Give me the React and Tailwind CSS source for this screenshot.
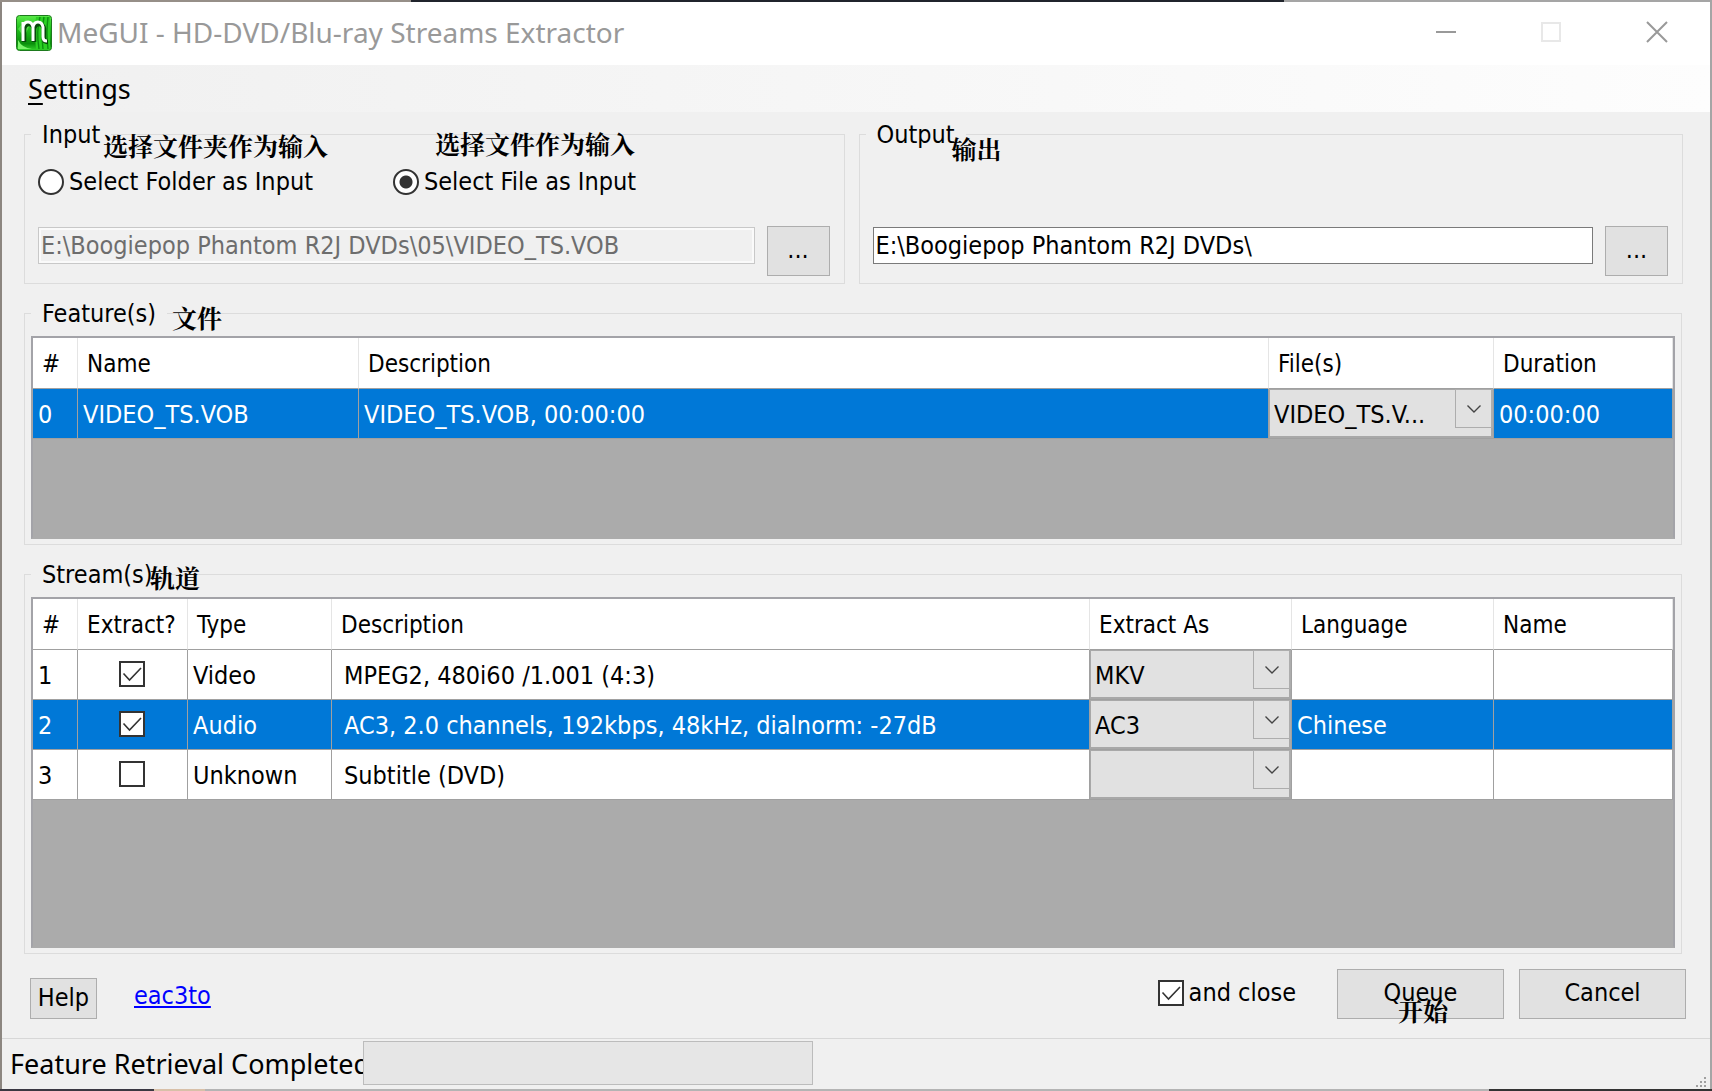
import { useState } from "react";

const fieldText = "text-[25px] leading-[30px]";
const button =
  "border border-[#adadad] bg-[#e1e1e1] pb-[2px] text-black text-[25px] leading-[30px] flex items-center justify-center shrink-0";

function AppIcon() {
  return (
    <svg width="36" height="36" viewBox="0 0 36 36" aria-hidden="true">
      <defs>
        <linearGradient id="leaf" x1="0" y1="0" x2="0" y2="1">
          <stop offset="0" stopColor="#5bea4a" />
          <stop offset="0.35" stopColor="#22c41e" />
          <stop offset="0.8" stopColor="#0a8f0c" />
          <stop offset="1" stopColor="#34d42c" />
        </linearGradient>
      </defs>
      <rect x="0.5" y="0.5" width="35" height="35" rx="3" fill="url(#leaf)" stroke="#1d7a1d" />
      <path d="M20 2q-2 14 0 32h14V2z" fill="#2bd023" />
      <path d="M24 2q-4 14-1 32M28 2q-3 16-1 32M32 2q-2 16 0 32" stroke="#0c8f10" strokeWidth="1.4" fill="none" />
      <path d="M2 25q4 8 14 9H2z" fill="#7df56c" />
      <path d="M2 14L10 4l4 6-6 12z" fill="#7df56c" opacity="0.5" />
      <path d="M8 9v18M8 14q1-5 5-5t5 5v13M18 14q1-5 5-5t5 5v9q0 4 4 4" stroke="#074a0a" strokeWidth="4.500" fill="none" />
      <path d="M7 7v19M7 12q1-5 5-5t5 5v14M17 12q1-5 5-5t5 5v10q0 4 4 4" stroke="#fff" strokeWidth="3" fill="none" />
    </svg>
  );
}

function Note({ className, children }) {
  return (
    <span
      lang="zh"
      className={
        "pointer-events-none absolute z-10 whitespace-nowrap font-['Noto_Serif_CJK_SC','Noto_Sans_CJK_SC',serif] text-[25px] leading-[30px] font-bold text-black " +
        className
      }
    >
      {children}
    </span>
  );
}

function Group({ title, note, className = "", children }) {
  return (
    <fieldset className={"relative min-w-0 border border-[#dcdcdc] " + className}>
      <legend className={"ml-[6px] px-[11px] pt-[2px] " + fieldText}>{title}</legend>
      {note}
      {children}
    </fieldset>
  );
}

function Radio({ id, label, checked, onChange }) {
  return (
    <div className="relative flex items-center gap-[5px]">
      <input
        id={id}
        type="radio"
        name="source"
        checked={checked}
        onChange={onChange}
        className="size-[26px] shrink-0 appearance-none rounded-full border-2 border-[#333] bg-white checked:bg-[radial-gradient(circle,#333_0_6px,#fff_7px)]"
      />
      <label htmlFor={id} className={"whitespace-nowrap " + fieldText}>{label}</label>
    </div>
  );
}

function Tick({ id, label, defaultChecked }) {
  return (
    <span className="relative block size-[26px] shrink-0">
      <input
        id={id}
        aria-label={label}
        type="checkbox"
        defaultChecked={defaultChecked}
        className="peer block size-[26px] appearance-none border-2 border-[#333] bg-white"
      />
      <svg viewBox="0 0 26 26" className="pointer-events-none absolute inset-0 hidden peer-checked:block" aria-hidden="true">
        <path d="M4.500 12.500l6 6.500L22 7" fill="none" stroke="#333" strokeWidth="1.600" />
      </svg>
    </span>
  );
}

function Combo({ label, value }) {
  return (
    <div className="relative h-[49px]">
      <select
        aria-label={label}
        defaultValue={value}
        className="block h-full w-full appearance-none border border-r-2 border-b-2 border-[#a8a8a8] bg-[#e1e1e1] pt-[3px] pl-[4px] text-[25px] leading-[30px] text-black"
      >
        <option value={value}>{value}</option>
      </select>
      <span className="pointer-events-none absolute top-0 right-0 flex h-[39px] w-[38px] items-center justify-center border border-r-2 border-[#adadad]">
        <svg width="14" height="8" viewBox="0 0 14 8" aria-hidden="true">
          <path d="M0.500 0.500L7 7l6.500-6.500" fill="none" stroke="#444" strokeWidth="1.400" />
        </svg>
      </span>
    </div>
  );
}

function Grid({ columns, className, children }) {
  return (
    <div className={"border-2 border-[#a3a3a8] border-b-[#ababab] bg-[#ababab] " + className}>
      <table className="w-full table-fixed border-separate border-spacing-0 text-left">
        <colgroup>
          {columns.map((c, i) => (
            <col key={i} className={c.width} />
          ))}
        </colgroup>
        <thead>
          <tr>
            {columns.map((c, i) => (
              <th
                key={i}
                scope="col"
                className="h-[51px] overflow-hidden border-r border-b border-r-[#e5e5e5] border-b-[#a0a0a0] bg-white pt-[2px] pl-[9px] text-[24px] leading-[30px] font-normal whitespace-nowrap"
              >
                {c.title}
              </th>
            ))}
          </tr>
        </thead>
        <tbody>{children}</tbody>
      </table>
    </div>
  );
}

function Cell({ selected, className = "pt-[2px] pl-[5px]", children }) {
  return (
    <td
      className={
        "h-[50px] overflow-hidden whitespace-nowrap border-r border-b border-[#a0a0a0] " +
        fieldText +
        (selected ? " bg-[#0078d7] text-white " : " bg-white text-black ") +
        className
      }
    >
      {children}
    </td>
  );
}

const featureColumns = [
  { title: "#", width: "w-[45px]" },
  { title: "Name", width: "w-[281px]" },
  { title: "Description", width: "" },
  { title: "File(s)", width: "w-[225px]" },
  { title: "Duration", width: "w-[179px]" },
];

const streamColumns = [
  { title: "#", width: "w-[45px]" },
  { title: "Extract?", width: "w-[110px]" },
  { title: "Type", width: "w-[144px]" },
  { title: "Description", width: "" },
  { title: "Extract As", width: "w-[202px]" },
  { title: "Language", width: "w-[202px]" },
  { title: "Name", width: "w-[179px]" },
];

const streams = [
  { n: 1, on: true, type: "Video", text: "MPEG2, 480i60 /1.001 (4:3)", as: "MKV", lang: "" },
  { n: 2, on: true, type: "Audio", text: "AC3, 2.0 channels, 192kbps, 48kHz, dialnorm: -27dB", as: "AC3", lang: "Chinese", selected: true },
  { n: 3, on: false, type: "Unknown", text: "Subtitle (DVD)", as: "", lang: "" },
];

export default function App() {
  const [source, setSource] = useState("file");
  return (
    <div className="flex min-h-screen flex-col bg-[#f0f0f0] font-['DejaVu_Sans_Condensed','DejaVu_Sans','Noto_Sans_CJK_SC',sans-serif] font-stretch-condensed text-black">
      <div className="h-[2px] bg-[linear-gradient(to_right,#968f88_24%,#20242c_24%,#20242c_75%,#a5a5a5_75%)]" />
      <div className="flex flex-1 flex-col border-r-2 border-l-2 border-r-[#a5a5a5] border-l-[#8c8680]">
        <header className="flex h-[63px] items-center bg-white pb-[3px] font-['Noto_Sans',sans-serif] font-stretch-normal">
          <div className="mt-px ml-[14px]"><AppIcon /></div>
          <h1 className="ml-[5px] flex-1 text-[28px] leading-[36px] whitespace-nowrap text-[#999]">
            MeGUI - HD-DVD/Blu-ray Streams Extractor
          </h1>
          <div className="flex h-full items-center">
            <button aria-label="Minimize" className="flex h-full w-[105px] items-center justify-center">
              <svg width="22" height="22" viewBox="0 0 22 22"><path d="M1 11h20" stroke="#999" strokeWidth="2" /></svg>
            </button>
            <button aria-label="Maximize" disabled className="flex h-full w-[105px] items-center justify-center">
              <svg width="22" height="22" viewBox="0 0 22 22"><path d="M2 2h18v18H2z" fill="none" stroke="#e8e8e8" strokeWidth="2" /></svg>
            </button>
            <button aria-label="Close" className="flex h-full w-[107px] items-center justify-center">
              <svg width="22" height="22" viewBox="0 0 22 22"><path d="M1 1l20 20M21 1L1 21" stroke="#999" strokeWidth="2" /></svg>
            </button>
          </div>
        </header>

        <nav className="flex h-[47px] items-center bg-linear-to-r from-[#f0f0f0] to-[#fdfdfd] pl-[26px] font-['Noto_Sans',sans-serif] font-stretch-normal">
          <button className="text-[27px] leading-[36px]"><u className="underline underline-offset-4">S</u>ettings</button>
        </nav>

        <main className="flex flex-1 flex-col gap-[13px] px-[22px] pt-[6px]">
          <div className="mr-[5px] grid grid-cols-[821fr_825fr] gap-[14px]">
            <Group
              title="Input"
              note={
                <>
                  <Note className="top-[-20px] left-[78px]">选择文件夹作为输入</Note>
                  <Note className="top-[-22px] left-[410px]">选择文件作为输入</Note>
                </>
              }
            >
              <div className="flex h-[47px] items-end gap-[80px] pl-[13px]">
                <Radio id="folder" label="Select Folder as Input" checked={source === "folder"} onChange={() => setSource("folder")} />
                <Radio id="file" label="Select File as Input" checked={source === "file"} onChange={() => setSource("file")} />
              </div>
              <div className="mt-[29px] mb-[7px] flex gap-[12px] pr-[14px] pl-[13px]">
                <input
                  aria-label="Input path"
                  disabled
                  defaultValue="E:\Boogiepop Phantom R2J DVDs\05\VIDEO_TS.VOB"
                  className="mt-px h-[37px] min-w-0 flex-1 border border-[#c8c8c8] bg-[#f0f0f0] px-[2px] text-[25px] leading-[30px] text-[#6d6d6d] inset-ring-2 inset-ring-[#fafafa]"
                />
                <button aria-label="Browse input" className={button + " h-[50px] w-[63px]"}>...</button>
              </div>
            </Group>
            <Group title="Output" note={<Note className="top-[-17px] left-[92px]">输出</Note>}>
              <div className="mt-[76px] mb-[7px] flex gap-[12px] pr-[14px] pl-[13px]">
                <input
                  aria-label="Output path"
                  defaultValue="E:\Boogiepop Phantom R2J DVDs\"
                  className="mt-px h-[37px] min-w-0 flex-1 border border-[#7a7a7a] bg-white px-[2px] text-[25px] leading-[30px]"
                />
                <button aria-label="Browse output" className={button + " h-[50px] w-[63px]"}>...</button>
              </div>
            </Group>
          </div>

          <Group title="Feature(s)" className="mr-[6px]" note={<Note className="top-[-27px] left-[147px]">文件</Note>}>
            <Grid columns={featureColumns} className="mx-[6px] mt-[7px] mb-[5px] h-[203px]">
              <tr>
                <Cell selected>0</Cell>
                <Cell selected>VIDEO_TS.VOB</Cell>
                <Cell selected>VIDEO_TS.VOB, 00:00:00</Cell>
                <Cell className="p-0"><Combo label="File(s)" value="VIDEO_TS.V..." /></Cell>
                <Cell selected>00:00:00</Cell>
              </tr>
            </Grid>
          </Group>

          <Group title="Stream(s)" className="mr-[6px]" note={<Note className="top-[-28px] left-[125px]">轨道</Note>}>
            <Grid columns={streamColumns} className="mx-[6px] mt-[7px] mb-[5px] h-[351px]">
              {streams.map((s) => (
                <tr key={s.n}>
                  <Cell selected={s.selected}>{s.n}</Cell>
                  <Cell selected={s.selected} className="p-0">
                    <div className="flex justify-center pr-px pb-[2px]">
                      <Tick label={"Extract stream " + s.n} defaultChecked={s.on} />
                    </div>
                  </Cell>
                  <Cell selected={s.selected}>{s.type}</Cell>
                  <Cell selected={s.selected} className="pt-[2px] pl-[12px]">{s.text}</Cell>
                  <Cell className="p-0"><Combo label={"Extract stream " + s.n + " as"} value={s.as} /></Cell>
                  <Cell selected={s.selected}>{s.lang}</Cell>
                  <Cell selected={s.selected} />
                </tr>
              ))}
            </Grid>
          </Group>

          <div className="flex items-start pt-[2px] pr-[2px] pl-[6px]">
            <button className={button + " mt-[9px] h-[41px] w-[67px]"}>Help</button>
            <a href="#eac3to" className={"mt-[12px] ml-[37px] text-[#0000ff] underline underline-offset-2 " + fieldText}>eac3to</a>
            <div className="mt-[9px] ml-auto flex items-center gap-[5px]">
              <Tick id="close" defaultChecked />
              <label htmlFor="close" className={fieldText}>and close</label>
            </div>
            <button className={button + " relative ml-[41px] h-[50px] w-[167px]"}>
              Queue
              <Note className="top-[25px] left-[60px]">开始</Note>
            </button>
            <button className={button + " ml-[15px] h-[50px] w-[167px]"}>Cancel</button>
          </div>
        </main>

        <footer className="flex h-[51px] items-start border-t border-[#d7d7d7] pt-[2px] pl-[8px]">
          <span role="status" className="w-[353px] overflow-hidden font-['Noto_Sans',sans-serif] text-[27px] leading-[46px] font-stretch-normal whitespace-nowrap">
            Feature Retrieval Completed
          </span>
          <div role="progressbar" aria-label="Progress" className="h-[44px] w-[450px] border border-[#bcbcbc] bg-[#e6e6e6]" />
          <svg width="12" height="12" viewBox="0 0 12 12" className="mr-[2px] ml-auto self-end" aria-hidden="true">
            <path d="M8 0h2v2h-2zM4 4h2v2h-2zM8 4h2v2h-2zM0 8h2v2h-2zM4 8h2v2h-2zM8 8h2v2h-2z" fill="#a0a0a0" />
          </svg>
        </footer>
      </div>
      <div className="h-[2px] bg-[linear-gradient(to_right,#3a3842_9%,#d8c0a8_9%,#d8c0a8_12%,#b4b4b4_12%,#b4b4b4_87%,#333_87%)]" />
    </div>
  );
}
